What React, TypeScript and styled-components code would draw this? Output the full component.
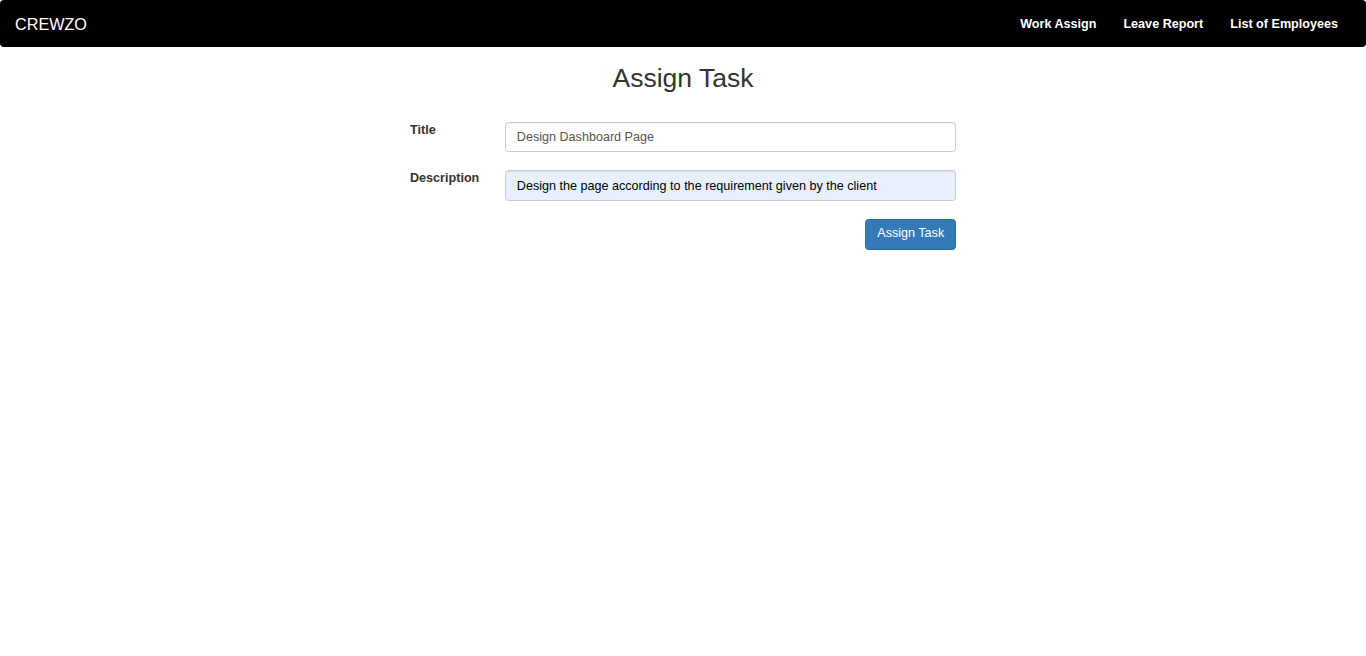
import React from "react";
import styled, { createGlobalStyle } from "styled-components";

const GlobalStyle = createGlobalStyle`
  html, body {
    margin: 0;
    padding: 0;
    background: #fff;
  }
  body {
    font-family: "Liberation Sans", Arial, Helvetica, sans-serif;
    font-size: 12.6px;
    line-height: 1.42857;
    color: #333;
  }
  * { box-sizing: border-box; }
`;

const Navbar = styled.nav`
  display: flex;
  align-items: center;
  justify-content: space-between;
  height: 46.5px;
  padding-top: 1px;
  background: #000;
  border-radius: 4px;
`;

const Brand = styled.a`
  padding-left: 15px;
  font-size: 16.2px;
  line-height: 20px;
  color: #fff;
  text-decoration: none;
`;

const NavList = styled.ul`
  display: flex;
  list-style: none;
  margin: 0 15px 0 0;
  padding: 0;
`;

const NavLink = styled.a`
  display: block;
  padding: 0 13.5px;
  font-size: 12.6px;
  font-weight: 700;
  line-height: 20px;
  color: #fff;
  text-decoration: none;

  li:last-child > & {
    padding-right: 13px;
  }
`;

const Main = styled.main`
  width: 546px;
  margin: 0 auto;
`;

const Heading = styled.h2`
  margin: 17.5px 0 27.5px;
  font-size: 26.5px;
  font-weight: 500;
  line-height: 1.1;
  text-align: center;
  color: #333;
`;

const Form = styled.form`
  display: flex;
  flex-direction: column;
  gap: 17px;
`;

const Row = styled.div`
  display: grid;
  grid-template-columns: 95px 1fr;
  align-items: start;
`;

const Label = styled.label`
  font-weight: 700;
  line-height: 18px;
  color: #333;
`;

const Input = styled.input<{ $filled?: boolean }>`
  display: block;
  width: 100%;
  height: 30.6px;
  margin-top: 1px;
  padding: 5.4px 10.8px;
  font-family: inherit;
  font-size: 12.6px;
  line-height: 1.42857;
  color: ${(p) => (p.$filled ? "#000" : "#555")};
  background: ${(p) => (p.$filled ? "#e8f0fe" : "#fff")};
  border: 1px solid #ccc;
  border-radius: 3.6px;
  box-shadow: inset 0 1px 1px rgba(0, 0, 0, 0.075);
  outline: none;
`;

const Actions = styled.div`
  display: flex;
  justify-content: flex-end;
  margin-top: 1px;
`;

const Button = styled.button`
  padding: 5.4px 10.8px;
  font-family: inherit;
  font-size: 12.6px;
  line-height: 1.42857;
  color: #fff;
  background: #337ab7;
  border: 1px solid #2e6da4;
  border-radius: 3.6px;
  cursor: pointer;
`;

export default function App() {
  return (
    <>
      <GlobalStyle />
      <Navbar>
        <Brand href="#">CREWZO</Brand>
        <NavList>
          <li><NavLink href="#">Work Assign</NavLink></li>
          <li><NavLink href="#">Leave Report</NavLink></li>
          <li><NavLink href="#">List of Employees</NavLink></li>
        </NavList>
      </Navbar>
      <Main>
        <Heading>Assign Task</Heading>
        <Form onSubmit={(e) => e.preventDefault()}>
          <Row>
            <Label htmlFor="title">Title</Label>
            <Input id="title" defaultValue="Design Dashboard Page" />
          </Row>
          <Row>
            <Label htmlFor="desc">Description</Label>
            <Input
              id="desc"
              $filled
              defaultValue="Design the page according to the requirement given by the client"
            />
          </Row>
          <Actions>
            <Button type="submit">Assign Task</Button>
          </Actions>
        </Form>
      </Main>
    </>
  );
}
